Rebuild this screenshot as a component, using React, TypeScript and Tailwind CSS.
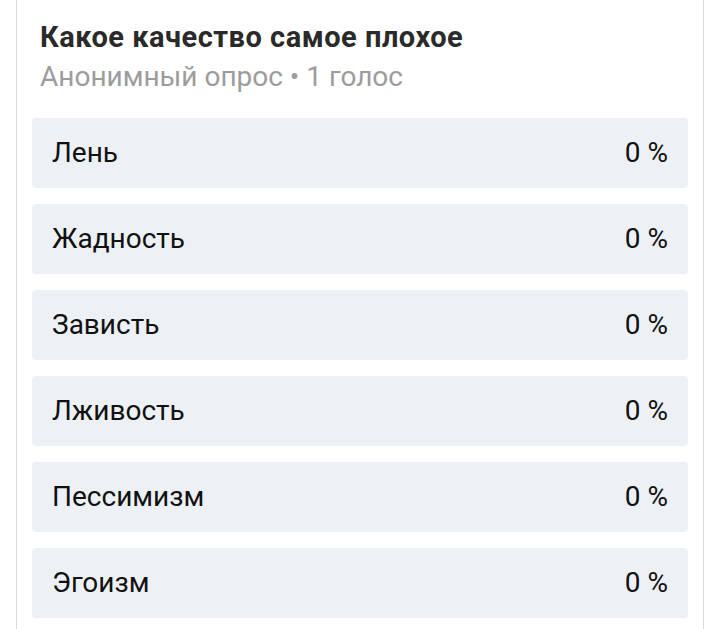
import React from "react";

const options = ["Лень", "Жадность", "Зависть", "Лживость", "Пессимизм", "Эгоизм"];

export default function App() {
  return (
    <div className="w-[720px] h-[629px] bg-white overflow-hidden" style={{ fontFamily: "Roboto, 'Noto Sans', sans-serif" }}>
      <div className="ml-[16px] w-[688px] h-full border-l border-r border-[#dcdcdc] px-[15px] pt-[17px]">
        <div className="pl-[8px] text-[29px] leading-[40px] font-bold tracking-[0.5px] text-[#2a2a2a]">Какое качество самое плохое</div>
        <div className="pl-[8px] text-[28px] leading-[40px] text-[#9c9c9c]">Анонимный опрос • 1 голос</div>
        <div className="mt-[21px] flex flex-col gap-[16px]">
          {options.map((o) => (
            <div key={o} className="h-[70px] rounded-[4px] bg-[#edf1f5] flex items-center justify-between pl-[20px] pr-[20px] text-[28px] text-[#111111]">
              <span>{o}</span>
              <span>0 %</span>
            </div>
          ))}
        </div>
      </div>
    </div>
  );
}
